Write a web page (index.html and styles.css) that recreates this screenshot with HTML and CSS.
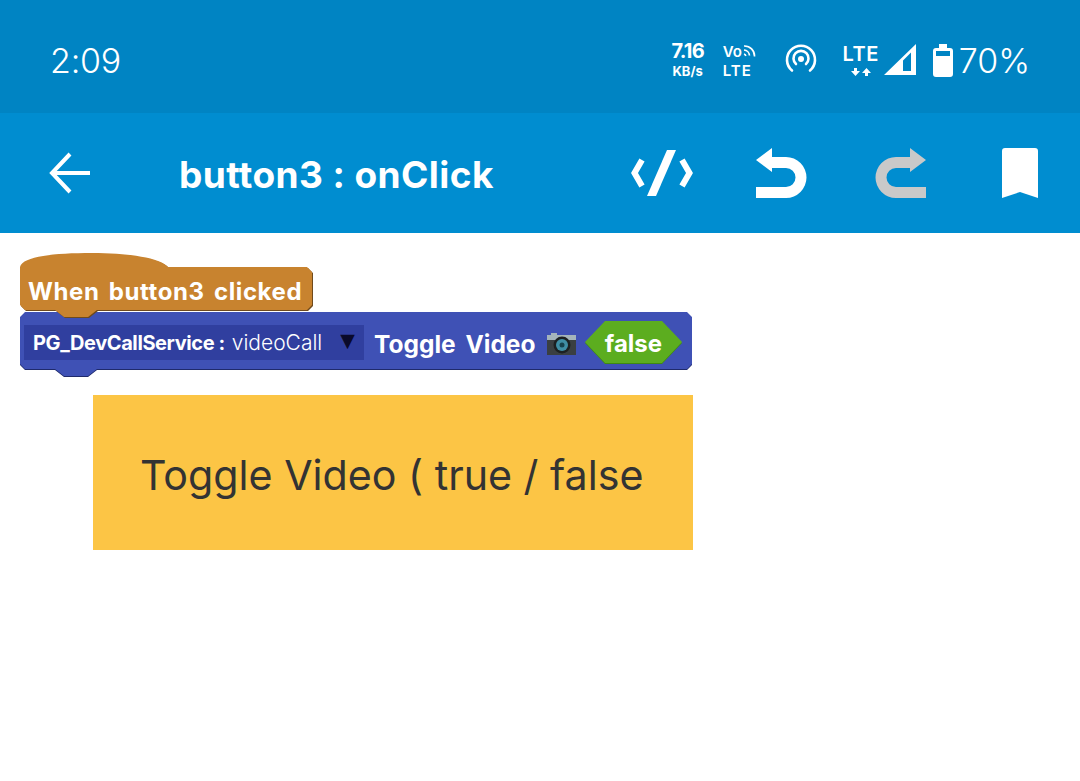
FILE: index.html
```html
<!DOCTYPE html>
<html lang="en">
  <head>
    <meta charset="UTF-8" />
    <title>button3 : onClick</title>
    <link rel="stylesheet" href="styles.css">
  </head>
  <body>
    <div class="status">
      <span class="time">2:09</span>
      <div class="status-icons">
        <div class="speed"><b>7.16</b><b class="speed-unit">KB/s</b></div>
        <div class="volte">
          <div class="volte-top">
            <span>Vo</span>
            <svg width="13" height="13" viewBox="0 0 13 13" fill="none" stroke="#fff" stroke-width="1.7"><path d="M1 5a6 6 0 0 1 5.500 5.500M1 1a10 10 0 0 1 10.500 10.500M1 9a2.500 2.500 0 0 1 1.800 2"/></svg>
          </div>
          <span class="volte-lte">LTE</span>
        </div>
        <svg class="hotspot" width="32" height="32" viewBox="0 0 32 32" fill="none" stroke="#fff" stroke-width="2.600" stroke-linecap="round"><circle cx="16" cy="15" r="3" fill="#fff" stroke="none"/><path d="M11 20a7.500 7.500 0 1 1 10 0"/><path d="M7 26.500a14 14 0 1 1 18 0"/></svg>
        <div class="lte">
          <span>LTE</span>
          <svg width="20" height="8" viewBox="0 0 20 8" fill="#fff"><path d="M3 0h3v3h3L4.500 8 0 3h3zM15.500 0 20 5h-3v3h-3V5h-3z"/></svg>
        </div>
        <svg class="signal" width="32" height="32" viewBox="0 0 32 32"><path fill-rule="evenodd" fill="#fff" d="M0 31 32 0v31zM19 27h8V8.500l-8 8z"/></svg>
        <svg class="battery" width="20" height="33" viewBox="0 0 20 33"><path fill-rule="evenodd" fill="#fff" d="M6 0h8v4h3a3 3 0 0 1 3 3v23a3 3 0 0 1-3 3H3a3 3 0 0 1-3-3V7a3 3 0 0 1 3-3h3zM3 7v5h14V7z"/></svg>
        <span class="percent">70%</span>
      </div>
    </div>

    <div class="toolbar">
      <svg class="back" width="42" height="42" viewBox="0 0 42 42" fill="none" stroke="#fff" stroke-width="4"><path d="M41 21H3M21 2 3 21l18 19"/></svg>
      <span class="title">button3 : onClick</span>
      <div class="actions">
        <div class="action">
          <svg width="62" height="46" viewBox="0 0 62 46"><path fill="none" stroke="#fff" stroke-width="6" d="M11 10 3.500 23 11 36M51 10l7.500 13L51 36"/><path fill="#fff" d="M36 0h9L25 46h-9z"/></svg>
        </div>
        <div class="action">
          <svg width="51" height="50" viewBox="0 0 51 50" fill="#fff"><path d="M16 0 0 12l16 12v-4h14a9.500 9.500 0 0 1 0 19H0v11h30a20.500 20.500 0 0 0 0-41H16z"/></svg>
        </div>
        <div class="action">
          <svg width="51" height="50" viewBox="0 0 51 50" fill="#c9c9c9"><path transform="matrix(-1 0 0 1 51 0)" d="M16 0 0 12l16 12v-4h14a9.500 9.500 0 0 1 0 19H0v11h30a20.500 20.500 0 0 0 0-41H16z"/></svg>
        </div>
        <div class="action">
          <svg width="36" height="50" viewBox="0 0 36 50" fill="#fff"><path d="M3 0h30a3 3 0 0 1 3 3v47l-18-6-18 6V3a3 3 0 0 1 3-3z"/></svg>
        </div>
      </div>
    </div>

    <div class="canvas">
      <div class="block hat">
        <svg class="block-shape hat-shape" width="294" height="67" viewBox="0 0 294 67">
          <path fill="#c8832f" d="M0 14C3 3 35 0 72 0c38 0 68 5 76 14h139l5 5v33l-5 5H77l-9 7H44l-9-7H5l-5-5z"/>
        </svg>
        <span class="hat-label">When button3 clicked</span>
      </div>

      <div class="block call">
        <svg class="block-shape call-shape" width="674" height="66" viewBox="0 0 674 66">
          <path fill="#3f51b5" d="M5 0h662l5 5v47l-5 5H77l-9 7H44l-9-7H5l-5-5V5z"/>
        </svg>
        <div class="call-target">
          <span class="call-name">PG_DevCallService :</span>
          <span class="call-var">videoCall</span>
          <span class="call-arrow">▼</span>
        </div>
        <span class="call-method">Toggle Video</span>
        <svg class="camera" width="29" height="25" viewBox="0 0 29 25">
          <path fill="#a4b4bb" d="M0 4h4V2h6v2h19v5H0z"/>
          <rect y="9" width="29" height="15" fill="#3a3f42"/>
          <circle cx="15" cy="14" r="8.500" fill="#1c2022"/>
          <circle cx="15" cy="14" r="6" fill="#3f8ea5"/>
          <circle cx="15" cy="14" r="2.500" fill="#16424f"/>
        </svg>
        <div class="bool">
          <svg class="bool-shape" width="97" height="43" viewBox="0 0 97 43"><path fill="#5cad1f" d="M20 0h57l20 21-20 21H20L0 21z"/></svg>
          <span>false</span>
        </div>
      </div>

      <div class="note">Toggle Video ( true / false</div>
    </div>
  </body>
</html>
```

FILE: styles.css
```css
* {
  box-sizing: border-box;
}
body {
  margin: 0;
  background-color: #fff;
  color: #fff;
  font-family: "Inter", "Liberation Sans", sans-serif;
  font-feature-settings: "calt" 0;
}
svg {
  display: block;
  flex: none;
}
.status {
  height: 113px;
  background-color: #0084c3;
  display: flex;
  align-items: center;
  justify-content: space-between;
  padding: 7px 50px 0 50px;
}
.time {
  font-size: 34px;
  font-weight: 300;
  letter-spacing: -0.2px;
}
.status-icons {
  display: flex;
  align-items: center;
}
.speed {
  width: 34px;
  margin-top: 1px;
  display: flex;
  flex-direction: column;
  align-items: center;
  font-size: 20px;
  line-height: 20px;
  letter-spacing: -0.8px;
}
.speed-unit {
  font-size: 13px;
  line-height: 20px;
  letter-spacing: 0;
}
.volte {
  width: 35px;
  margin: 1px 0 0 18px;
  font-size: 15px;
  font-weight: 600;
  line-height: 19px;
}
.volte-top {
  display: flex;
  align-items: center;
  gap: 1px;
}
.volte-lte {
  letter-spacing: 1px;
}
.hotspot {
  margin-left: 27px;
}
.lte {
  width: 38px;
  margin: -1px 0 0 25px;
  display: flex;
  flex-direction: column;
  align-items: center;
  gap: 3px;
  font-size: 20px;
  font-weight: 600;
  line-height: 22px;
  letter-spacing: 0.5px;
}
.signal {
  margin-left: 4px;
}
.battery {
  margin-left: 17px;
}
.percent {
  margin-left: 6px;
  font-size: 34px;
  font-weight: 300;
}
.toolbar {
  height: 120px;
  background-color: #008dd0;
  display: flex;
  align-items: center;
  padding-left: 49px;
}
.back {
  margin-right: 88px;
}
.title {
  margin-top: 3px;
  font-size: 37px;
  font-weight: 700;
  letter-spacing: 0.42px;
}
.actions {
  margin-left: auto;
  display: flex;
  align-items: center;
}
.action {
  width: 119.5px;
  display: flex;
  justify-content: center;
}
.canvas {
  padding: 20px 0 0 20px;
  color: #fff;
}
.block {
  position: relative;
  display: flex;
  align-items: center;
}
.block-shape {
  position: absolute;
  left: 0;
  top: 0;
}
.hat {
  z-index: 1;
  width: 292px;
  height: 59px;
  padding: 17px 0 0 8px;
}
.hat-shape {
  filter: drop-shadow(1px 1px 0 #6f4a1c);
}
.hat-label {
  position: relative;
  font-size: 24px;
  font-weight: 700;
  letter-spacing: 0.6px;
  word-spacing: 3px;
}
.call {
  width: 672px;
  height: 57px;
  padding: 0 0 0 4px;
}
.call-shape {
  filter: drop-shadow(0 1px 0 #1f2a6b);
}
.call-target {
  position: relative;
  width: 340px;
  height: 35px;
  margin-top: 3px;
  background-color: #303f9f;
  display: flex;
  align-items: center;
  padding: 1px 0 0 9px;
  font-size: 20px;
}
.call-name {
  font-weight: 700;
  letter-spacing: -0.4px;
}
.call-var {
  margin-left: 7px;
  font-size: 21px;
  font-weight: 300;
}
.call-arrow {
  margin: -5px 0 0 18px;
  color: #0a0a2a;
  font-family: "DejaVu Sans", sans-serif;
  font-size: 19px;
}
.call-method {
  position: relative;
  margin: 7px 0 0 10px;
  font-size: 24.500px;
  font-weight: 700;
  word-spacing: 4px;
}
.camera {
  position: relative;
  margin: 6px 0 0 12px;
}
.bool {
  position: relative;
  width: 97px;
  height: 43px;
  margin: 3px 0 0 9px;
  display: flex;
  align-items: center;
  justify-content: center;
  font-size: 24px;
  font-weight: 700;
}
.bool-shape {
  position: absolute;
  left: 0;
  top: 0;
  filter: drop-shadow(0 1px 0 #3f8a12);
}
.bool span {
  position: relative;
  margin: 2px 0 0 -1px;
}
.note {
  width: 600px;
  height: 155px;
  margin: 26px 0 0 73px;
  padding: 4px 0 0 47px;
  background-color: #fcc545;
  color: #333;
  display: flex;
  align-items: center;
  font-size: 41.200px;
}
```
